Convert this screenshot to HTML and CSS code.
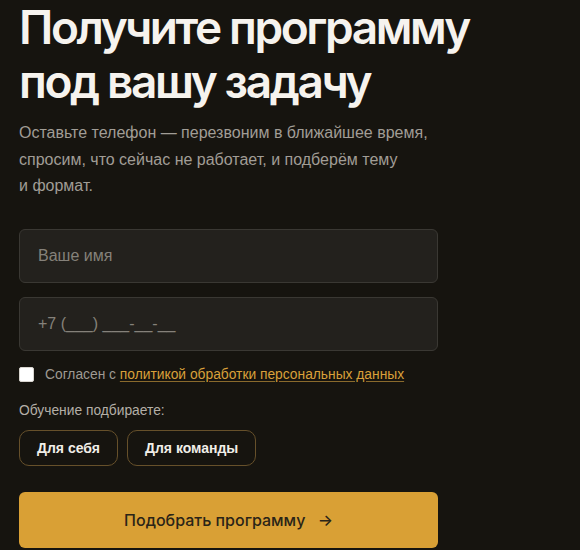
FILE: index.html
```html
<!DOCTYPE html>
<html lang="ru">
<head>
	<meta charset="UTF-8">
	<title>Получите программу</title>
	<link rel="stylesheet" href="styles.css">
</head>
<body>
	<div class="lead">
		<h1 class="title">Получите программу<br>под вашу задачу</h1>
		<p class="desc">Оставьте телефон — перезвоним в ближайшее время, спросим, что сейчас не работает, и подберём тему<br>и формат.</p>

		<form class="form">
			<input class="field" type="text" placeholder="Ваше имя">
			<input class="field" type="tel" placeholder="+7 (___) ___-__-__">

			<label class="agree">
				<span class="box"></span>
				<span>Согласен с <a href="#">политикой обработки персональных данных</a></span>
			</label>

			<p class="label">Обучение подбираете:</p>
			<div class="chips">
				<button class="chip" type="button">Для себя</button>
				<button class="chip" type="button">Для команды</button>
			</div>

			<button class="submit" type="button">Подобрать программу <span class="arr">→</span></button>
		</form>
	</div>
</body>
</html>
```

FILE: styles.css
```css
*{margin: 0;padding: 0;box-sizing: border-box;}
body{background: #16140f;font-family: 'Liberation Sans', Arial, sans-serif;color: #f5f2ec;}
.lead{width: 438px;padding-left: 19px;}
.title{font-family: Inter, 'Noto Sans', sans-serif;font-size: 46px;line-height: 54px;font-weight: 600;letter-spacing: -2.4px;color: #f6f3ee;width: 560px;}
.desc{margin-top: 12px;font-size: 16px;line-height: 26.5px;color: #a19d96;width: 420px;}
.form{margin-top: 29px;display: flex;flex-direction: column;}
.field{height: 54px;background: #23211d;border: 1px solid #3a3833;border-radius: 6px;padding: 0 18px;font-family: inherit;font-size: 16px;color: #f5f2ec;outline: none;}
.field + .field{margin-top: 14px;}
.field::placeholder{color: #85817a;}
.agree{display: flex;align-items: center;gap: 11px;margin-top: 16px;font-size: 13.8px;color: #9e9a93;}
.box{width: 15px;height: 15px;background: #fff;border-radius: 2px;border: 1px solid #d8d5cf;}
.agree a{color: #d9a03a;text-decoration: underline;text-decoration-color: #8a6a2c;text-underline-offset: 2px;}
.label{margin-top: 21px;font-size: 13.8px;color: #b4afa7;}
.chips{display: flex;gap: 9px;margin-top: 12px;}
.chip{height: 36px;padding: 0 17px;background: transparent;border: 1px solid #66502a;border-radius: 10px;font-family: inherit;font-size: 14px;font-weight: bold;color: #f1eee8;}
.submit{margin-top: 26px;height: 56px;background: #d9a035;border: 0;border-radius: 6px;font-family: Inter, 'Noto Sans', sans-serif;font-size: 16px;font-weight: 500;color: #2a2418;}
.arr{margin-left: 8px;}
```
